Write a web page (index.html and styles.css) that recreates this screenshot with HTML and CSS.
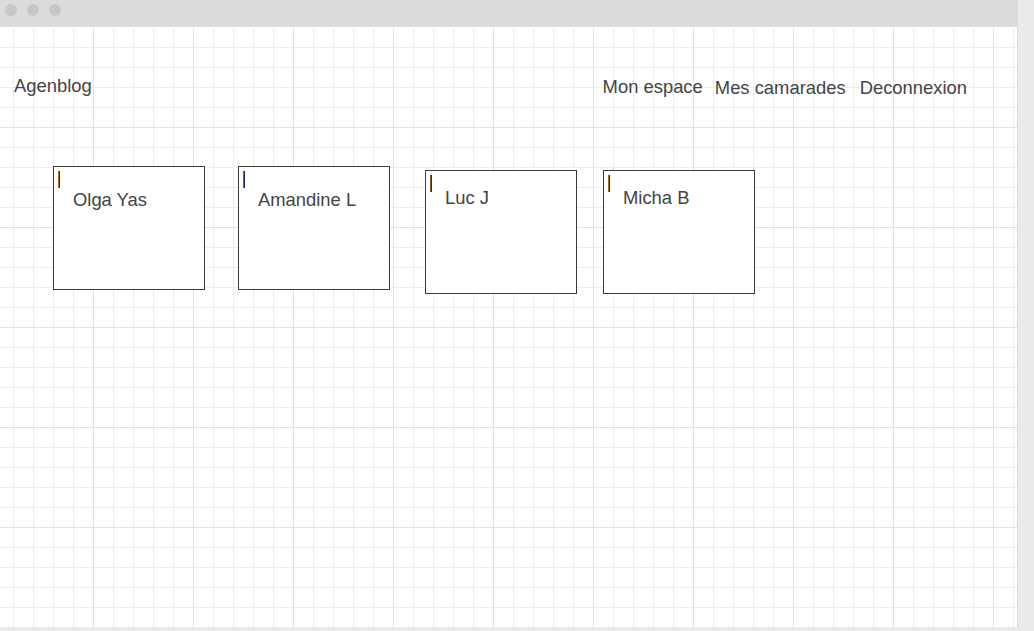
FILE: index.html
```html
<!DOCTYPE html>
<html lang="fr">
<head>
<meta charset="utf-8">
<title>Agenblog</title>
<link rel="stylesheet" href="styles.css">
</head>
<body>
<div class="window">
  <div class="frame">
    <div class="titlebar">
      <span class="dot"></span>
      <span class="dot"></span>
      <span class="dot"></span>
    </div>
    <div class="viewport">
      <header class="header">
        <div class="brand">Agenblog</div>
        <nav class="nav">
          <a class="nav-link" href="#">Mon espace</a>
          <a class="nav-link nav-link--b" href="#">Mes camarades</a>
          <a class="nav-link nav-link--c" href="#">Deconnexion</a>
        </nav>
      </header>
      <section class="cards">
        <div class="card card--a"><span class="caret caret--warm"></span><div class="name">Olga Yas</div></div>
        <div class="card card--b"><span class="caret caret--cool"></span><div class="name">Amandine L</div></div>
        <div class="card card--c"><span class="caret caret--cool"></span><div class="name">Luc J</div></div>
        <div class="card card--d"><span class="caret caret--warm"></span><div class="name">Micha B</div></div>
      </section>
    </div>
  </div>
</div>
</body>
</html>
```

FILE: styles.css
```css
html, body {
  margin: 0;
  padding: 0;
}

body {
  width: 1034px;
  height: 631px;
  overflow: hidden;
  background: #ebebeb;
  font-family: "Liberation Sans", Arial, sans-serif;
  color: #444;
}

.window {
  display: flex;
  width: 1034px;
  height: 631px;
  background: #ebebeb;
}

.frame {
  width: 1017px;
  height: 627px;
  border-right: 1px solid #dadada;
  display: flex;
  flex-direction: column;
}

.titlebar {
  height: 27px;
  box-sizing: border-box;
  background: #dcdcdc;
  display: flex;
  align-items: flex-start;
  gap: 10px;
  padding: 4px 0 0 5px;
}

.dot {
  width: 12px;
  height: 12px;
  border-radius: 50%;
  background: #c7c7c7;
}

.viewport {
  flex: 1;
  border-top: 1px solid #fff;
  background-color: #fff;
  background-clip: padding-box;
  background-image:
    linear-gradient(to right, #e1e1e1 1px, transparent 1px),
    linear-gradient(to bottom, #e1e1e1 1px, transparent 1px),
    linear-gradient(to right, #ededed 1px, transparent 1px),
    linear-gradient(to bottom, #ededed 1px, transparent 1px);
  background-size: 100px 100px, 100px 100px, 20px 20px, 20px 20px;
  background-position: 93px 0, 0 99px, 13px 0, 0 19px;
}

.header {
  display: flex;
  justify-content: space-between;
  align-items: flex-start;
  padding: 48px 50px 0 14px;
  font-size: 18.4px;
  line-height: 20px;
}

.brand {
  color: #444;
}

.nav {
  display: flex;
  align-items: flex-start;
  margin-top: 1px;
}

.nav-link {
  color: #444;
  text-decoration: none;
}

.nav-link--b {
  margin-left: 12px;
  margin-top: 1px;
}

.nav-link--c {
  margin-left: 14px;
  margin-top: 1px;
}

.cards {
  display: flex;
  align-items: flex-start;
  margin-top: 68px;
  padding-left: 53px;
}

.card {
  width: 152px;
  height: 124px;
  box-sizing: border-box;
  border: 1px solid #3a3a3a;
  background: #fff;
  padding: 4px 4px 0;
}

.card--b {
  margin-left: 33px;
}

.card--c {
  margin-left: 35px;
  margin-top: 4px;
}

.card--d {
  margin-left: 26px;
  margin-top: 4px;
}

.caret {
  display: block;
  width: 2px;
  height: 17px;
}

.caret--warm {
  background: linear-gradient(to right, #b8661f 50%, #2a2a40 50%);
}

.caret--cool {
  background: linear-gradient(to right, #8a5a2a 50%, #1c2a66 50%);
}

.name {
  margin: 2px 0 0 15px;
  font-size: 18.4px;
  line-height: 20px;
  color: #444;
}

.card--c .name,
.card--d .name {
  margin-top: -4px;
}
```
